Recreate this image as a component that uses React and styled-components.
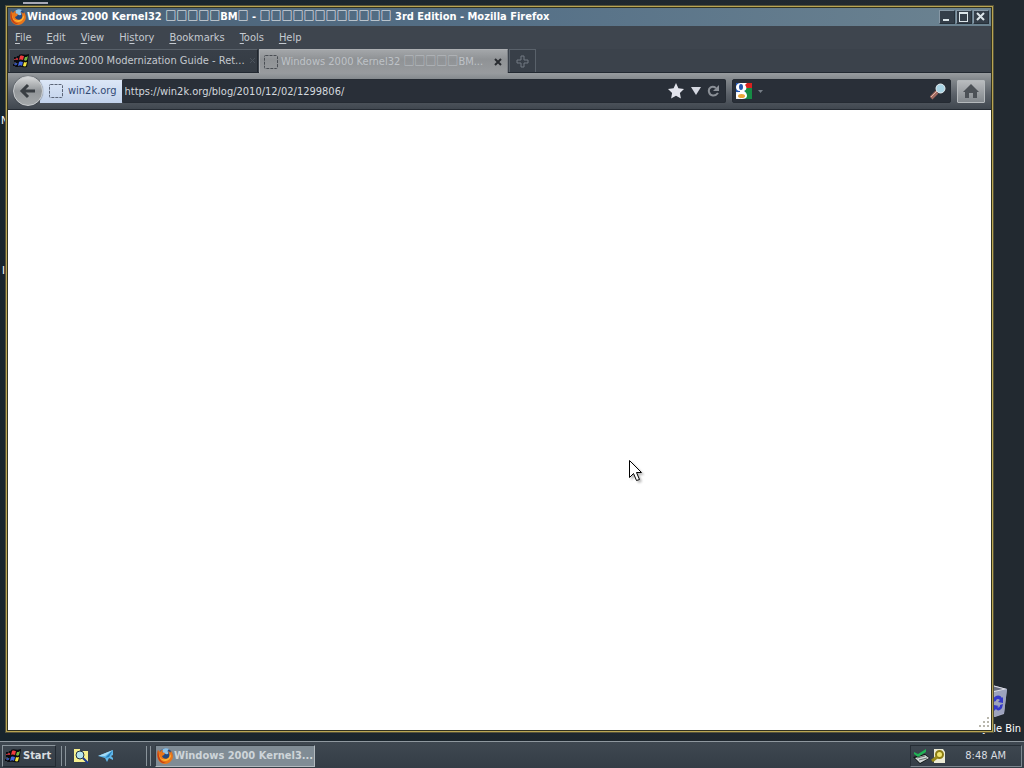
import React from "react";
import styled, { createGlobalStyle } from "styled-components";

const GlobalStyle = createGlobalStyle`
  *, *::before, *::after { box-sizing: border-box; }
  body {
    margin: 0;
    background: #20272f;
    font-family: "DejaVu Sans Condensed", "Noto Sans", "Noto Sans CJK JP", sans-serif;
    font-size: 11px;
    line-height: 14px;
  }
  button, input { font: inherit; color: inherit; margin: 0; padding: 0; border: 0; background: none; }
  svg { display: block; flex: none; }
`;

const Desktop = styled.div`
  position: relative;
  display: flex;
  flex-direction: column;
  min-height: 100vh;
  overflow: hidden;
  background: linear-gradient(90deg, #17242c, #222930 90%);
`;

const Workspace = styled.main`
  position: relative;
  display: flex;
  flex: 1;
  padding: 5px 30px 8px 5px;
`;

const DesktopIcon = styled.div`
  position: absolute;
  display: flex;
  flex-direction: column;
  align-items: center;
  gap: 4px;
  color: #fff;
  white-space: nowrap;
  ${(p) => p.$corner}
`;

const Window = styled.section`
  position: relative;
  display: flex;
  flex: 1;
  min-width: 0;
  flex-direction: column;
  border: 1px solid #55523b;
  padding: 2px;
  background: #33331f;
  box-shadow: inset 0 0 0 1px #b9a552;
`;

const TitleBar = styled.header`
  display: flex;
  align-items: center;
  gap: 1px;
  height: 18px;
  padding: 0 2px;
  color: #fff;
  font-weight: bold;
  background: linear-gradient(90deg, #4a6075, #557087 50%, #6c8391);
`;

const Title = styled.h1`
  flex: 1;
  min-width: 0;
  margin: 0;
  font-size: inherit;
  line-height: 18px;
  white-space: nowrap;
`;

const Glyphs = styled.span`
  font-family: "Noto Sans CJK JP", sans-serif;
  line-height: 1;
`;

const Caption = styled.div`
  display: flex;
  gap: 1px;
`;

const CaptionButton = styled.button`
  display: grid;
  place-items: center;
  width: 16px;
  height: 14px;
  background: #343e49;
  border: 1px solid;
  border-color: #8798a5 #27313a #27313a #8798a5;
`;

const MenuBar = styled.nav`
  display: flex;
  gap: 15px;
  height: 23px;
  padding: 0 7px;
  align-items: center;
  color: #c5cad0;
  background: #3e454e;
`;

const MenuButton = styled.button`
  u { text-underline-offset: 2px; }
`;

const TabStrip = styled.div`
  display: flex;
  gap: 1px;
  height: 24px;
  padding: 0 1px;
  background: #3b424b;
  border-bottom: 1px solid #222931;
`;

const TabBox = styled.div`
  display: flex;
  align-items: center;
  width: 249px;
  height: ${(p) => (p.$active ? 24 : 23)}px;
  padding: ${(p) => (p.$active ? "0 5px 0 3px" : "0 1px 0 3px")};
  color: ${(p) => (p.$active ? "#bec2c7" : "#c3c8ce")};
  background: ${(p) => (p.$active ? "linear-gradient(#a3a6a9, #8f9295 40%, #989b9e)" : "linear-gradient(#383f48, #343b43)")};
  border: 1px solid;
  border-color: ${(p) => (p.$active ? "#adb0b3 #7c8085 transparent #adb0b3" : "#59616a #20262d transparent #59616a")};
  border-bottom: 0;
`;

const TabLabel = styled.button`
  display: flex;
  flex: 1;
  min-width: 0;
  align-items: center;
  gap: 2px;
  text-align: left;
  white-space: nowrap;
  line-height: 18px;
`;

const IconButton = styled.button`
  display: grid;
  place-items: center;
  flex: none;
`;

const NewTab = styled(IconButton)`
  width: 27px;
  height: 23px;
  border: 1px solid #59616a;
  border-bottom: 0;
  background: #383f48;
`;

const NavBar = styled.div`
  display: flex;
  align-items: center;
  gap: 6px;
  height: 37px;
  padding: 0 6px 0 5px;
  color: #d3d8dd;
  background: linear-gradient(#989c9f, #868b8f 15%, #5a6068 60%, #40474f);
  border-bottom: 1px solid #262c34;
`;

const Location = styled.div`
  display: flex;
  flex: 1;
  min-width: 0;
  align-items: center;
`;

const BackButton = styled(IconButton)`
  width: 30px;
  height: 30px;
  margin-right: -3px;
  border-radius: 50%;
  border: 1px solid #c8cbcd;
  background: linear-gradient(#d6d8d9, #929699 50%, #a4a8aa);
  box-shadow: 0 0 1px #22282f;
  z-index: 1;
`;

const Identity = styled.button`
  display: flex;
  align-items: center;
  gap: 4px;
  height: 23px;
  padding: 0 5px 0 8px;
  color: #324a74;
  background: linear-gradient(#dce7f7, #c2d2eb);
`;

const Field = styled.div`
  display: flex;
  align-items: center;
  height: 24px;
  padding-left: 3px;
  gap: ${(p) => (p.$search ? 2 : 6)}px;
  background: #292f38;
  border: 1px solid #252b33;
  border-radius: 2px;
  ${(p) => (p.$search ? "flex: none; width: 219px; padding-right: 4px;" : "flex: 1; min-width: 0; padding-right: 5px; border-left: 0;")}
`;

const TextInput = styled.input`
  flex: 1;
  min-width: 0;
  width: 0;
  height: 20px;
  outline: 0;
`;

const HomeButton = styled(IconButton)`
  width: 28px;
  height: 23px;
  border: 1px solid #b5b9bc;
  border-radius: 1px;
  background: linear-gradient(#b8bbbe, #83888d);
`;

const Page = styled.article`
  display: flex;
  flex: 1;
  align-items: flex-end;
  justify-content: flex-end;
  min-height: 0;
  background: #fff;
`;

const Pointer = styled.svg`
  position: absolute;
  left: 629px;
  top: 460px;
  filter: drop-shadow(2px 2px 1px #0004);
`;

const Taskbar = styled.footer`
  display: flex;
  align-items: center;
  height: 27px;
  padding: 2px 2px 0;
  color: #d9dde0;
  background: linear-gradient(#3f4851, #343d46);
  border-top: 1px solid #8f989f;
`;

const StartButton = styled.button`
  display: flex;
  align-items: center;
  gap: 2px;
  width: 54px;
  height: 22px;
  padding: 0 2px;
  font-weight: bold;
  border: 1px solid;
  border-color: #8b959c #222a32 #222a32 #8b959c;
`;

const Grip = styled.div`
  width: 5px;
  height: 20px;
  margin-left: 5px;
  border: solid #89939a;
  border-width: 0 1px;
`;

const QuickLaunch = styled.div`
  display: flex;
  align-items: center;
  gap: 8px;
  width: 75px;
  padding-left: 6px;
`;

const TaskButton = styled.button`
  display: flex;
  align-items: center;
  gap: 1px;
  width: 160px;
  height: 22px;
  margin-left: 4px;
  padding: 0 1px;
  color: #ced5d9;
  font-weight: bold;
  white-space: nowrap;
  background: #808c95;
  border: 1px solid;
  border-color: #333c44 #b2babf #b2babf #333c44;
`;

const Tray = styled.div`
  display: flex;
  align-items: center;
  width: 112px;
  height: 22px;
  margin-left: auto;
  padding: 0 15px 0 2px;
  gap: 1px;
  border: 1px solid;
  border-color: #252d35 #7c868e #7c868e #252d35;

  time { margin-left: auto; }
`;

function Firefox() {
  return (
    <svg width="16" height="16" viewBox="0 0 16 16" aria-hidden="true">
      <circle cx="8.500" cy="7.500" r="7" fill="#24497f" />
      <path d="M5 2c2-2 5-2 7-1-1 1-2 2-1 3 1 1 0 3-2 2L6 5z" fill="#8ec3e8" />
      <path d="M1 2l2 2c1-2 2-2 3-2l-1 2 3 1-1 2-2 1c1 3 5 4 7 1 1-2 0-4-1-6 1 0 2 1 2 2l1-2c3 4 2 8 0 10-3 4-9 4-12 0-2-3-2-7-1-11z" fill="#e9751a" />
      <path d="M2 6c1 5 4 6 7 5 2 0 4-2 4-5l1 2c-1 4-4 5-6 5-3 0-6-3-6-7z" fill="#ffb434" />
      <path d="M1 2l1 6c1 4 3 6 7 7-7 1-10-6-8-13z" fill="#c23f15" />
    </svg>
  );
}

function WindowsFlag() {
  return (
    <svg width="16" height="14" viewBox="0 0 16 14" aria-hidden="true">
      <path d="M6 1c3-2 5 1 10-1l-2 13c-4 1-6-1-10 0z" fill="#090b0f" />
      <path d="M1 3h2v2H1zM4 2h2v3H3zM1 6h2v2H1zM3 6h2v3H3zM0 10h2v2H0zM3 10h2v3H2z" fill="#0a0b10" />
      <path d="M7 2c2-1 2 0 4 0l-1 4c-1 0-2-1-4 0z" fill="#f03c3e" />
      <path d="M12 3c1 0 2 0 3-1l-1 4c-1 1-2 1-3 0z" fill="#72b542" />
      <path d="M6 8c2-1 3 0 4 0l-1 4c-1-1-2-1-4 0z" fill="#4368e0" />
      <path d="M11 8c1 1 2 0 3 0l-1 4c-1 1-2 0-3 0z" fill="#f4e63e" />
      <path d="M3 4h2v2H2zM1 5h1v1H1z" fill="#b52d34" /><path d="M2 9h2v2H1z" fill="#344fae" />
    </svg>
  );
}

function Placeholder({ color }) {
  return (
    <svg width="16" height="16" aria-hidden="true">
      <rect x="1.500" y="1.500" width="13" height="13" rx="1" fill="none" stroke={color} strokeDasharray="3 1" />
    </svg>
  );
}

function SquareText() {
  return (
    <>
      Windows 2000 Kernel32 <Glyphs>□□□□□</Glyphs>BM
    </>
  );
}

const menus = ["File", "Edit", "View", "History", "Bookmarks", "Tools", "Help"];
const accessKeys = { History: 2 };

function Menu({ name }) {
  const key = accessKeys[name] || 0;
  return (
    <MenuButton type="button">
      {name.slice(0, key)}
      <u>{name[key]}</u>
      {name.slice(key + 1)}
    </MenuButton>
  );
}

export default function App() {
  return (
    <Desktop>
      <GlobalStyle />
      <Workspace>
        <DesktopIcon $corner="left: 23px; top: 0;">
          <svg width="25" height="4" aria-hidden="true"><path d="M0 2h25v2H0z" fill="#a8a9b6" /></svg>
        </DesktopIcon>
        <DesktopIcon $corner="left: 1px; top: 114px;">N</DesktopIcon>
        <DesktopIcon $corner="left: 2px; top: 264px;">I</DesktopIcon>
        <DesktopIcon $corner="right: 3px; bottom: 5px;">
          <svg width="40" height="34" viewBox="0 0 40 34" aria-hidden="true">
            <path d="M8 4l12-3 15 4-3 25-9 3-12-5z" fill="#a9adc4" />
            <path d="M20 7l15-2-3 24-10 4z" fill="#9da3bd" />
            <path d="M8 4l12-3 15 4-13 3z" fill="#e1e2e9" />
            <path d="M12 4l8-2 11 3-9 2z" fill="#686c7d" />
            <path d="M21 15c2-4 7-5 9-1l1-1v6l-5-1 2-2c-2-2-4-1-4 1l-3 1zM31 20l-1 4c-2 3-5 3-6 1l-2 2v-6l5 1-2 1c2 1 3 0 3-2z" fill="#3439c8" />
          </svg>
          Recycle Bin
        </DesktopIcon>
        <Window>
          <TitleBar>
            <Firefox />
            <Title>
              <SquareText /><Glyphs>□</Glyphs> - <Glyphs>□□□□□□□□□□□□</Glyphs> 3rd Edition - Mozilla Firefox
            </Title>
            <Caption>
              <CaptionButton type="button" aria-label="Minimize">
                <svg width="12" height="10"><path d="M2 7h6v2H2z" fill="#dce5e9" /></svg>
              </CaptionButton>
              <CaptionButton type="button" aria-label="Maximize">
                <svg width="12" height="10"><path d="M1 0h9v10H1zM2 2v7h7V2z" fillRule="evenodd" fill="#dce5e9" /></svg>
              </CaptionButton>
              <CaptionButton type="button" aria-label="Close window">
                <svg width="12" height="10"><path d="M2 1l7 7M9 1L2 8" stroke="#dce5e9" strokeWidth="2" /></svg>
              </CaptionButton>
            </Caption>
          </TitleBar>
          <MenuBar>
            {menus.map((name) => <Menu key={name} name={name} />)}
          </MenuBar>
          <TabStrip>
            <TabBox>
              <TabLabel type="button">
                <WindowsFlag />
                <span>Windows 2000 Modernization Guide - Ret...</span>
              </TabLabel>
              <IconButton type="button" aria-label="Close first tab">
                <svg width="7" height="8"><path d="M1 1l5 5M6 1L1 6" stroke="#4b535c" /></svg>
              </IconButton>
            </TabBox>
            <TabBox $active>
              <TabLabel type="button">
                <Placeholder color="#4a4e54" />
                <span><SquareText />...</span>
              </TabLabel>
              <IconButton type="button" aria-label="Close tab">
                <svg width="8" height="8"><path d="M1 1l6 6M7 1L1 7" stroke="#292c31" strokeWidth="2" /></svg>
              </IconButton>
            </TabBox>
            <NewTab type="button" aria-label="New tab">
              <svg width="13" height="13"><path d="M5 1h3v4h4v3H8v4H5V8H1V5h4z" fill="none" stroke="#727a83" /></svg>
            </NewTab>
          </TabStrip>
          <NavBar>
            <Location>
              <BackButton type="button" aria-label="Back">
                <svg width="18" height="16"><path d="M9 2L3 8l6 6M4 8h12" fill="none" stroke="#393e43" strokeWidth="3" /></svg>
              </BackButton>
              <Identity type="button"><Placeholder color="#5b6577" />win2k.org</Identity>
              <Field>
                <TextInput aria-label="Address" defaultValue="https://win2k.org/blog/2010/12/02/1299806/" />
                <IconButton type="button" aria-label="Bookmark">
                  <svg width="18" height="18"><path d="M9 1l2.400 5.200 5.600.7-4.100 4 1 5.700L9 13.800l-4.900 2.800 1-5.700L1 6.900l5.600-.7z" fill="#e2e4ec" /></svg>
                </IconButton>
                <IconButton type="button" aria-label="History list">
                  <svg width="10" height="10"><path d="M0 1h10L5 9z" fill="#d5d8e1" /></svg>
                </IconButton>
                <IconButton type="button" aria-label="Reload">
                  <svg width="13" height="13"><path d="M9 3C5 0 1 3 2 7s6 5 9 1" fill="none" stroke="#8b9097" strokeWidth="2" /><path d="M12 0v6H6z" fill="#8b9097" /></svg>
                </IconButton>
              </Field>
            </Location>
            <Field $search>
              <IconButton type="button" aria-label="Search engine">
                <svg width="27" height="16">
                  <path d="M0 0h10v16H0z" fill="#2459b6" />
                  <path d="M9 0h7v5H9z" fill="#d8221f" /><path d="M9 5h7v11H9z" fill="#168c45" />
                  <path d="M0 9h4v7H0z" fill="#eef1f7" />
                  <path d="M5 0h6L9 2c2 2 2 5-1 6 2 1 3 3 3 5s-2 3-5 3-6-1-6-3 2-4 4-4V8C1 8 0 6 0 4s2-4 5-4z" fill="#fff" />
                  <ellipse cx="5" cy="4" rx="2" ry="3" fill="#2456ad" />
                  <ellipse cx="5.500" cy="13" rx="3.500" ry="2" fill="#e9a63a" />
                  <path d="M22 7h5l-2.500 3z" fill="#777e87" />
                </svg>
              </IconButton>
              <TextInput aria-label="Search" />
              <IconButton type="button" aria-label="Search the web">
                <svg width="16" height="17"><path d="M1 15l6-6" stroke="#a06a61" strokeWidth="4" /><path d="M1 14l6-6" stroke="#e0b5a5" /><circle cx="10.500" cy="5.500" r="4.500" fill="#a9d4e5" stroke="#e7eff3" /></svg>
              </IconButton>
            </Field>
            <HomeButton type="button" aria-label="Home">
              <svg width="18" height="16"><path d="M9 1l8 8h-2v6h-4v-5H7v5H3V9H1z" fill="#4c5157" /></svg>
            </HomeButton>
          </NavBar>
          <Page>
            <svg width="14" height="14" aria-hidden="true">
              {[[10, 1], [6, 5], [10, 5], [2, 9], [6, 9], [10, 9]].map(([x, y]) => <rect key={x + "-" + y} x={x} y={y} width="2" height="2" fill="#b9b7ad" />)}
            </svg>
          </Page>
        </Window>
      </Workspace>
      <Taskbar>
        <StartButton type="button"><WindowsFlag />Start</StartButton>
        <Grip />
        <QuickLaunch>
          <IconButton type="button" aria-label="Search files">
            <svg width="18" height="16"><path d="M2 1h6v2h8v11H2z" fill="#f6ef8e" /><circle cx="8" cy="7" r="4" fill="#b4e3ef" stroke="#22313c" /><path d="M11 10l5 5" stroke="#1d3a91" strokeWidth="2" /></svg>
          </IconButton>
          <IconButton type="button" aria-label="Mail">
            <svg width="16" height="14"><path d="M0 7l15-6v5l-2 1 2 2v2l-4-2-2 4-2-4z" fill="#60b7e9" /><path d="M15 1L7 9l4-1z" fill="#237ebb" /><path d="M0 7l15-6-8 6z" fill="#a3daf5" /></svg>
          </IconButton>
        </QuickLaunch>
        <Grip />
        <TaskButton type="button"><Firefox />Windows 2000 Kernel3...</TaskButton>
        <Tray>
          <svg width="17" height="16" aria-hidden="true"><path d="M0 9l12-3 5 4-10 6z" fill="#0d1411" /><path d="M2 10l10-3 4 3-9 5z" fill="#d3d8d8" /><path d="M4 10l8-2M6 12l8-2" stroke="#66706d" /><path d="M1 4l4 2 8-5v3L5 9 1 6z" fill="#20b455" /></svg>
          <svg width="15" height="16" aria-hidden="true"><path d="M3 1h9l2 3v11H3z" fill="#ecebd5" /><circle cx="8.500" cy="6.500" r="3.500" fill="#f2e771" stroke="#8b7c13" strokeWidth="2" /><path d="M6 9l-5 4" stroke="#998b1a" strokeWidth="3" /></svg>
          <time>8:48 AM</time>
        </Tray>
      </Taskbar>
      <Pointer width="14" height="22" aria-hidden="true"><path d="M.500.500v17l4-4 3 7 3-1-3-7h5z" fill="#fff" stroke="#000" /></Pointer>
    </Desktop>
  );
}
